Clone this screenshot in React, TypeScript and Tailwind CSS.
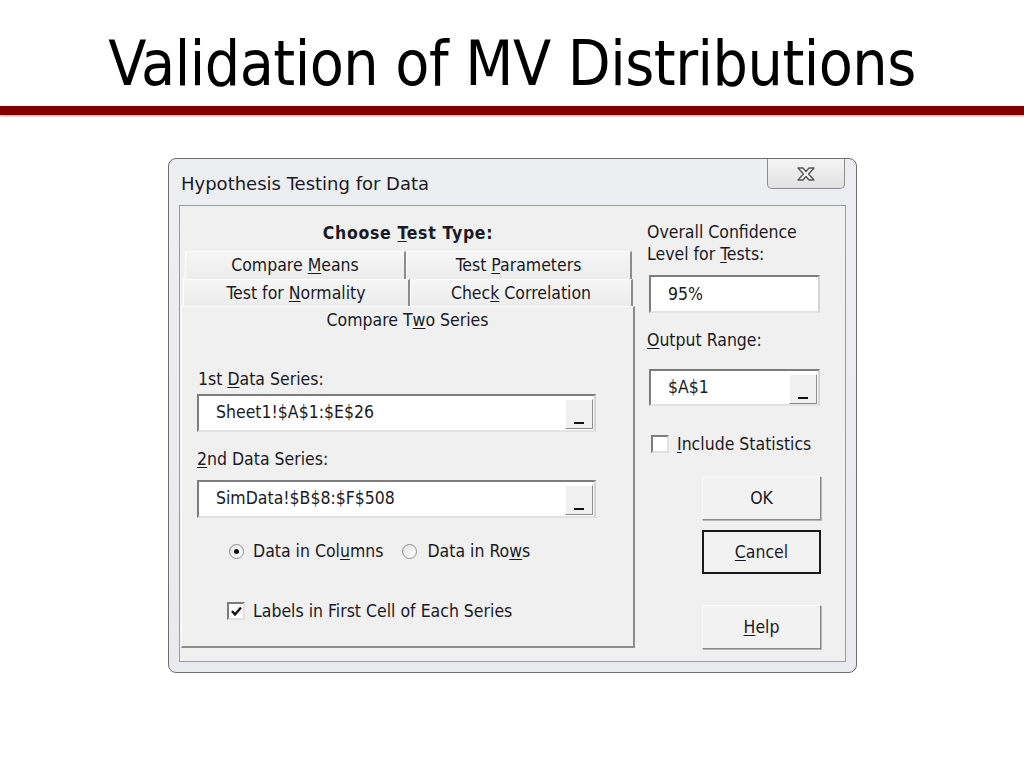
import React from "react";

const U = ({ children }: { children: React.ReactNode }) => (
  <span className="underline underline-offset-2 decoration-1">{children}</span>
);

const PickButton = () => (
  <div className="w-[28px] h-[30px] mt-[3px] mr-[1px] bg-[#f0f0f0] border border-t-white border-l-white border-b-[#8a8a8a] border-r-[#8a8a8a] flex items-end justify-center pb-[4px]">
    <div className="w-[10px] h-[2px] bg-[#111]" />
  </div>
);

const RangeInput = ({ value, width, height }: { value: string; width: string; height: string }) => (
  <div
    className={`${width} ${height} bg-white border-2 border-t-[#7c7c7c] border-l-[#7c7c7c] border-b-[#e2e2e2] border-r-[#d4d4d4] flex justify-between`}
  >
    <span className="pl-[17px] self-center leading-none">{value}</span>
    <PickButton />
  </div>
);

const Tab = ({ children, w, ml = "" }: { children: React.ReactNode; w: string; ml?: string }) => (
  <div
    className={`${w} ${ml} h-full bg-gradient-to-b from-[#f6f6f6] to-[#ececec] border-t border-l border-t-white border-l-white border-r-2 border-r-[#8c8c8c] flex items-center justify-center`}
  >
    <span>{children}</span>
  </div>
);

const Button = ({ children, def = false, mt }: { children: React.ReactNode; def?: boolean; mt: string }) => (
  <div
    className={`${mt} ml-[55px] w-[119px] h-[44px] flex items-center justify-center ${
      def
        ? "border-2 border-[#1a1a1a] bg-[#f2f2f2]"
        : "bg-[#f2f2f2] border border-t-[#fafafa] border-l-[#fafafa] border-b-[#8a8a8a] border-r-[#8a8a8a] shadow-[1px_1px_0_#b8b8b8]"
    }`}
  >
    {children}
  </div>
);

const Radio = ({ on }: { on?: boolean }) => (
  <div className="w-[15px] h-[15px] rounded-full border border-[#8e8e8e] bg-gradient-to-br from-[#e2e2e2] to-white flex items-center justify-center">
    {on && <div className="w-[5px] h-[5px] rounded-full bg-[#111]" />}
  </div>
);

const Check = ({ on }: { on?: boolean }) => (
  <div className="w-[18px] h-[18px] bg-white border-2 border-t-[#7c7c7c] border-l-[#7c7c7c] border-b-[#e0e0e0] border-r-[#e0e0e0] flex items-center justify-center">
    {on && (
      <svg width="13" height="13" viewBox="0 0 13 13">
        <path d="M2 6 L5 9.5 L11 2.5" stroke="#111" strokeWidth="2.4" fill="none" />
      </svg>
    )}
  </div>
);

export default function App() {
  return (
    <div
      className="w-[1024px] h-[768px] bg-white flex flex-col overflow-hidden"
      style={{ fontFamily: "'DejaVu Sans Condensed', 'DejaVu Sans', sans-serif" }}
    >
      <div className="h-[106px] flex justify-center items-start">
        <h1 className="text-[62px] leading-none mt-[33px] text-black tracking-[-0.5px]">
          Validation of MV Distributions
        </h1>
      </div>
      <div className="h-[9px] bg-[#800000] shadow-[0_1px_2px_#d88]" />

      <div className="mt-[43px] ml-[168px] w-[689px] h-[515px] rounded-[8px] border border-[#6e6e6e] bg-gradient-to-b from-[#eceef1] to-[#e8eaed] flex flex-col text-[17.5px] text-[#1a1a24]">
        {/* title bar */}
        <div className="h-[46px] flex justify-between items-start">
          <span className="ml-[12px] mt-[11px] text-[18px] [font-family:'DejaVu_Sans',sans-serif]">
            Hypothesis Testing for Data
          </span>
          <div className="w-[78px] h-[30px] mr-[11px] rounded-b-[5px] border border-t-0 border-[#8e8e8e] bg-gradient-to-b from-[#f4f4f4] to-[#e2e2e2] flex items-center justify-center">
            <svg width="22" height="16" viewBox="0 0 22 16">
              <path
                d="M3 2 H8 L11 5.5 L14 2 H19 L13.5 8 L19 14 H14 L11 10.5 L8 14 H3 L8.5 8 Z"
                fill="#f4f4f4"
                stroke="#555"
                strokeWidth="1.3"
                strokeLinejoin="round"
              />
            </svg>
          </div>
        </div>

        {/* client area */}
        <div className="mx-[10px] h-[457px] border border-[#9c9c9c] bg-[#f0f0f0] flex">
          {/* left column */}
          <div className="ml-[1px] w-[454px] flex flex-col">
            <div className="h-[45px] pt-[14px] text-center font-bold tracking-[0.7px]">
              Choose <U>T</U>est Type:
            </div>
            <div className="h-[28px] flex">
              <Tab w="w-[221px]" ml="ml-[4px]">
                Compare <U>M</U>eans
              </Tab>
              <Tab w="w-[226px]">
                Test <U>P</U>arameters
              </Tab>
            </div>
            <div className="h-[27px] flex">
              <Tab w="w-[227px]" ml="ml-[2px]">
                Test for <U>N</U>ormality
              </Tab>
              <Tab w="w-[223px]">
                Chec<U>k</U> Correlation
              </Tab>
            </div>
            {/* panel */}
            <div className="h-[342px] border-t border-l border-t-white border-l-white border-r-2 border-b-2 border-r-[#8c8c8c] border-b-[#8c8c8c] flex flex-col">
              <div className="h-[26px] flex items-center justify-center">
                Compare T<U>w</U>o Series
              </div>
              <div className="mt-[35px] ml-[16px] leading-[22px]">
                1st <U>D</U>ata Series:
              </div>
              <div className="mt-[4px] ml-[15px]">
                <RangeInput value="Sheet1!$A$1:$E$26" width="w-[399px]" height="h-[38px]" />
              </div>
              <div className="mt-[16px] ml-[15px] leading-[22px]">
                <U>2</U>nd Data Series:
              </div>
              <div className="mt-[10px] ml-[15px]">
                <RangeInput value="SimData!$B$8:$F$508" width="w-[399px]" height="h-[38px]" />
              </div>
              <div className="mt-[22px] ml-[47px] flex items-center h-[22px]">
                <Radio on />
                <span className="ml-[9px]">
                  Data in Col<U>u</U>mns
                </span>
                <span className="ml-[19px]">
                  <Radio />
                </span>
                <span className="ml-[10px]">
                  Data in Ro<U>w</U>s
                </span>
              </div>
              <div className="mt-[38px] ml-[45px] flex items-center h-[22px]">
                <Check on />
                <span className="ml-[8px]">Labels in First Cell of Each Series</span>
              </div>
            </div>
          </div>

          {/* right column */}
          <div className="ml-[12px] flex flex-col">
            <div className="mt-[15px] leading-[22px]">
              Overall Confidence
              <br />
              Level for <U>T</U>ests:
            </div>
            <div className="mt-[10px] ml-[2px] w-[171px] h-[38px] bg-white border-2 border-t-[#7c7c7c] border-l-[#7c7c7c] border-b-[#e2e2e2] border-r-[#d4d4d4] flex items-center">
              <span className="pl-[17px]">95%</span>
            </div>
            <div className="mt-[16px] leading-[22px]">
              <U>O</U>utput Range:
            </div>
            <div className="mt-[18px] ml-[2px]">
              <RangeInput value="$A$1" width="w-[171px]" height="h-[37px]" />
            </div>
            <div className="mt-[27px] ml-[4px] flex items-center h-[22px]">
              <Check />
              <span className="ml-[8px]">
                <U>I</U>nclude Statistics
              </span>
            </div>
            <Button mt="mt-[21px]">OK</Button>
            <Button mt="mt-[10px]" def>
              <U>C</U>ancel
            </Button>
            <Button mt="mt-[31px]">
              <U>H</U>elp
            </Button>
          </div>
        </div>
      </div>
    </div>
  );
}
